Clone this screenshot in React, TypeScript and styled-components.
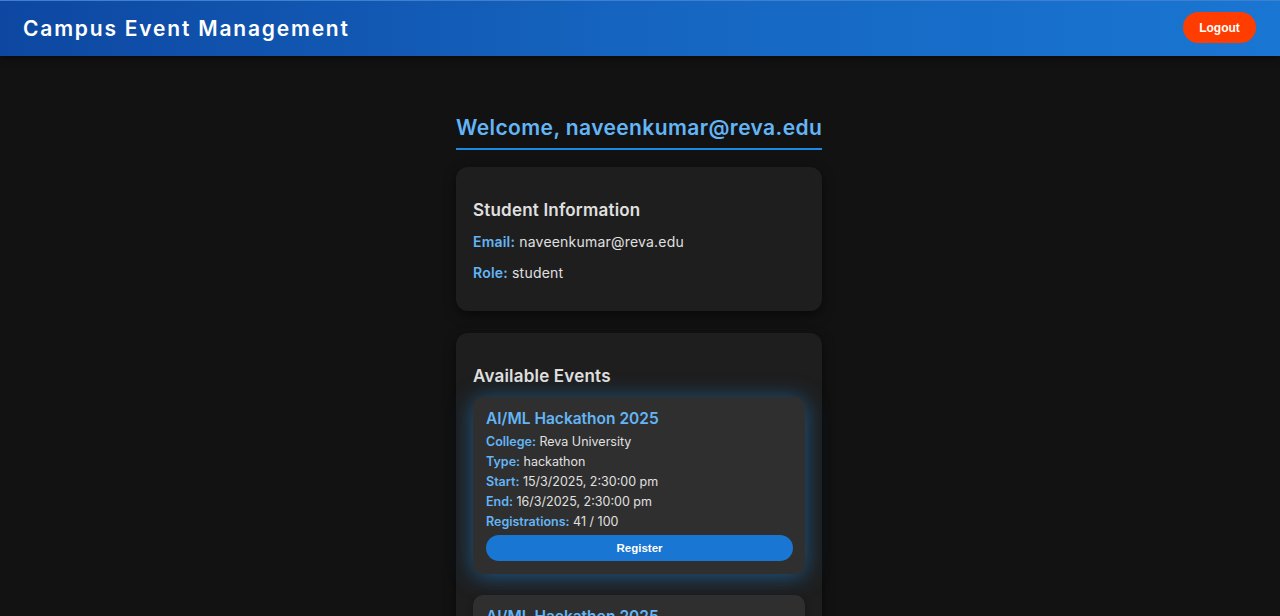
import React from "react";
import styled, { createGlobalStyle } from "styled-components";

const Global = createGlobalStyle`
  html, body { margin: 0; padding: 0; background: #121212; }
  body { font-family: Inter, "Open Sans", sans-serif; color: #e0e0e0; }
  * { box-sizing: border-box; }
`;

const Header = styled.header`
  height: 56px;
  display: flex;
  align-items: center;
  justify-content: space-between;
  padding: 0 24px 0 23px;
  background: linear-gradient(90deg, #0d47a1 0%, #1565c0 50%, #1976d2 100%);
  border-top: 1px solid #3f7fd0;
  box-shadow: 0 2px 6px rgba(0, 0, 0, 0.5);
`;

const Brand = styled.h1`
  margin: 0 0 1px;
  font-size: 21px;
  font-weight: 600;
  letter-spacing: 1.8px;
  color: #ffffff;
`;

const LogoutButton = styled.button`
  background: #ff3d00;
  color: #fff;
  border: none;
  border-radius: 16px;
  height: 31px;
  width: 73px;
  font-family: Arial, "Liberation Sans", sans-serif;
  font-weight: 700;
  font-size: 12px;
  margin-top: -2px;
`;

const Main = styled.main`
  width: 368px;
  margin: 0 auto;
  padding: 59px 2px 0 0;
  display: flex;
  flex-direction: column;
`;

const Welcome = styled.h2`
  margin: 0 0 17px;
  font-size: 21px;
  line-height: 26px;
  letter-spacing: 0.4px;
  font-weight: 600;
  color: #64b5f6;
  padding-bottom: 7px;
  border-bottom: 2px solid #1e88e5;
  white-space: nowrap;
`;

const Card = styled.section`
  background: #1e1e1e;
  border-radius: 12px;
  padding: 33px 17px 17px;
  margin-bottom: 22px;
  box-shadow: 0 4px 12px rgba(0, 0, 0, 0.5);
`;

const CardTitle = styled.h3`
  margin: 0 0 12px;
  font-size: 17px;
  line-height: 20px;
  letter-spacing: 0.2px;
  font-weight: 600;
  color: #e0e0e0;
`;

const InfoLine = styled.p`
  margin: 0 0 12px;
  padding-top: 1px;
  font-size: 14px;
  line-height: 18px;
  letter-spacing: 0.2px;
  color: #e0e0e0;
`;

const Label = styled.strong`
  color: #64b5f6;
  font-weight: 600;
`;

const EventList = styled.div`
  margin-top: -1px;
  display: flex;
  flex-direction: column;
  gap: 21px;
`;

const EventCard = styled.article<{ $active?: boolean }>`
  background: #2f2f2f;
  border-radius: 10px;
  padding: 12px 12px 13px 13px;
  box-shadow: ${(p) =>
    p.$active ? "0 2px 22px rgba(33, 150, 243, 0.5)" : "0 2px 6px rgba(0, 0, 0, 0.3)"};
`;

const EventTitle = styled.h4`
  margin: 0 0 3px;
  font-size: 15.5px;
  font-weight: 600;
  color: #64b5f6;
  line-height: 20px;
`;

const EventLine = styled.p`
  margin: 0;
  font-size: 12.5px;
  line-height: 20px;
  color: #e0e0e0;
`;

const RegisterButton = styled.button`
  margin-top: 3px;
  width: 100%;
  height: 26px;
  border: none;
  border-radius: 13px;
  background: #1976d2;
  color: #fff;
  font-family: Arial, "Liberation Sans", sans-serif;
  font-weight: 700;
  font-size: 11.5px;
`;

const events = [
  {
    title: "AI/ML Hackathon 2025",
    college: "Reva University",
    type: "hackathon",
    start: "15/3/2025, 2:30:00 pm",
    end: "16/3/2025, 2:30:00 pm",
    reg: "41 / 100",
  },
  {
    title: "AI/ML Hackathon 2025",
    college: "Reva University",
    type: "hackathon",
    start: "15/3/2025, 2:30:00 pm",
    end: "16/3/2025, 2:30:00 pm",
    reg: "41 / 100",
  },
];

export default function App() {
  return (
    <>
      <Global />
      <Header>
        <Brand>Campus Event Management</Brand>
        <LogoutButton>Logout</LogoutButton>
      </Header>
      <Main>
        <Welcome>Welcome, naveenkumar@reva.edu</Welcome>
        <Card>
          <CardTitle>Student Information</CardTitle>
          <InfoLine>
            <Label>Email:</Label> naveenkumar@reva.edu
          </InfoLine>
          <InfoLine>
            <Label>Role:</Label> student
          </InfoLine>
        </Card>
        <Card>
          <CardTitle>Available Events</CardTitle>
          <EventList>
            {events.map((e, i) => (
              <EventCard key={i} $active={i === 0}>
                <EventTitle>{e.title}</EventTitle>
                <EventLine>
                  <Label>College:</Label> {e.college}
                </EventLine>
                <EventLine>
                  <Label>Type:</Label> {e.type}
                </EventLine>
                <EventLine>
                  <Label>Start:</Label> {e.start}
                </EventLine>
                <EventLine>
                  <Label>End:</Label> {e.end}
                </EventLine>
                <EventLine>
                  <Label>Registrations:</Label> {e.reg}
                </EventLine>
                <RegisterButton>Register</RegisterButton>
              </EventCard>
            ))}
          </EventList>
        </Card>
      </Main>
    </>
  );
}
